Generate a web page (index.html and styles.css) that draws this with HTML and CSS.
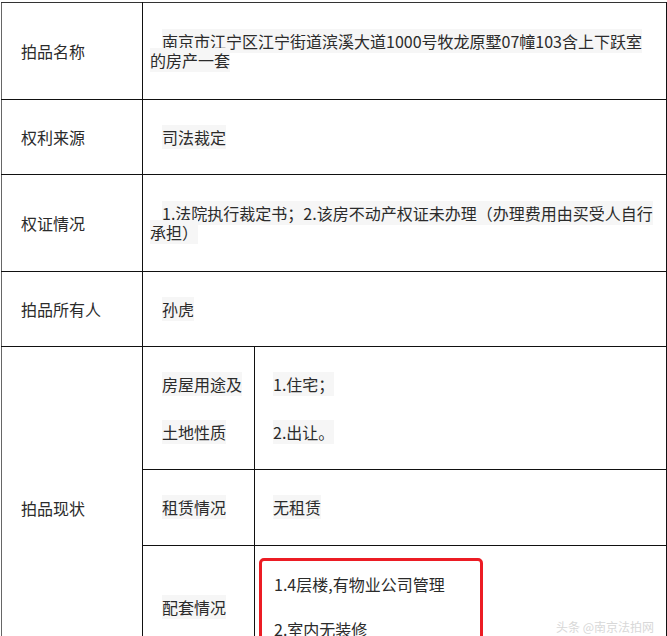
FILE: index.html
```html
<!DOCTYPE html>
<html lang="zh-CN">
<head>
    <meta charset="UTF-8">
    <meta name="viewport" content="width=device-width, initial-scale=1.0">
    <title>拍品信息</title>
    <link rel="stylesheet" href="styles.css">
</head>
<body>
<table class="lot-table">
    <colgroup>
        <col class="col-label">
        <col class="col-sub">
        <col class="col-value">
    </colgroup>
    <tr class="row-tall">
        <td class="label">拍品名称</td>
        <td class="value" colspan="2"><span class="txt">南京市江宁区江宁街道滨溪大道1000号牧龙原墅07幢103含上下跃室的房产一套</span></td>
    </tr>
    <tr class="row-short">
        <td class="label">权利来源</td>
        <td class="value" colspan="2"><span class="txt">司法裁定</span></td>
    </tr>
    <tr class="row-tall">
        <td class="label">权证情况</td>
        <td class="value" colspan="2"><span class="txt">1.法院执行裁定书；2.该房不动产权证未办理（办理费用由买受人自行承担）</span></td>
    </tr>
    <tr class="row-short">
        <td class="label">拍品所有人</td>
        <td class="value" colspan="2"><span class="txt">孙虎</span></td>
    </tr>
    <tr class="row-use">
        <td class="label" rowspan="3">拍品现状</td>
        <td class="sub">
            <p><span class="txt">房屋用途及</span></p>
            <p><span class="txt">土地性质</span></p>
        </td>
        <td class="detail">
            <p><span class="txt">1.住宅；</span></p>
            <p><span class="txt">2.出让。</span></p>
        </td>
    </tr>
    <tr class="row-rent">
        <td class="sub"><span class="txt">租赁情况</span></td>
        <td class="detail"><span class="txt">无租赁</span></td>
    </tr>
    <tr class="row-facility">
        <td class="sub"><span class="txt">配套情况</span></td>
        <td class="detail detail-marked">
            <div class="marked">
                <p>1.4层楼,有物业公司管理</p>
                <p>2.室内无装修</p>
            </div>
        </td>
    </tr>
</table>

<div class="watermark">头条 @南京法拍网</div>
</body>
</html>
```

FILE: styles.css
```css
* {
    box-sizing: border-box;
}

body {
    margin: 0;
    padding: 2px 0 0 1px;
    background: #fff;
    color: #2b2b2b;
    font-family: "Noto Sans CJK SC", "Noto Sans", sans-serif;
    font-size: 16px;
    overflow: hidden;
    height: 636px;
}

.lot-table {
    border-collapse: collapse;
    table-layout: fixed;
    width: 665px;
}

.col-label { width: 141px; }
.col-sub { width: 112px; }
.col-value { width: 412px; }

.lot-table td {
    border: 1px solid #111;
    vertical-align: middle;
    padding: 0;
    line-height: 19px;
}

.lot-table td.label {
    border-left-color: #666;
    padding-left: 19px;
}

.lot-table tr:first-child td {
    border-top-color: #333;
}

.txt {
    background: #f6f6f6;
}

.value {
    padding: 0 10px 0 7px !important;
    text-indent: 12px;
}

.row-tall { height: 97px; }
.row-short { height: 75px; }
.row-use { height: 123px; }
.row-rent { height: 76px; }
.row-facility { height: 124px; }

.sub {
    padding-left: 19px !important;
}

.detail {
    padding-left: 18px !important;
}

.sub p, .detail p {
    margin: 0;
}

.row-use p + p {
    margin-top: 29px;
}

.detail-marked {
    vertical-align: top !important;
    padding: 12px 0 0 4px !important;
}

.marked {
    width: 224px;
    height: 100px;
    border: 3px solid #ec1c24;
    border-radius: 5px;
    padding: 14px 0 0 12px;
}

.marked p + p {
    margin-top: 26px;
}

.watermark {
    position: absolute;
    left: 556px;
    top: 618px;
    font-size: 12px;
    color: #d8d8d8;
    white-space: nowrap;
}
```
